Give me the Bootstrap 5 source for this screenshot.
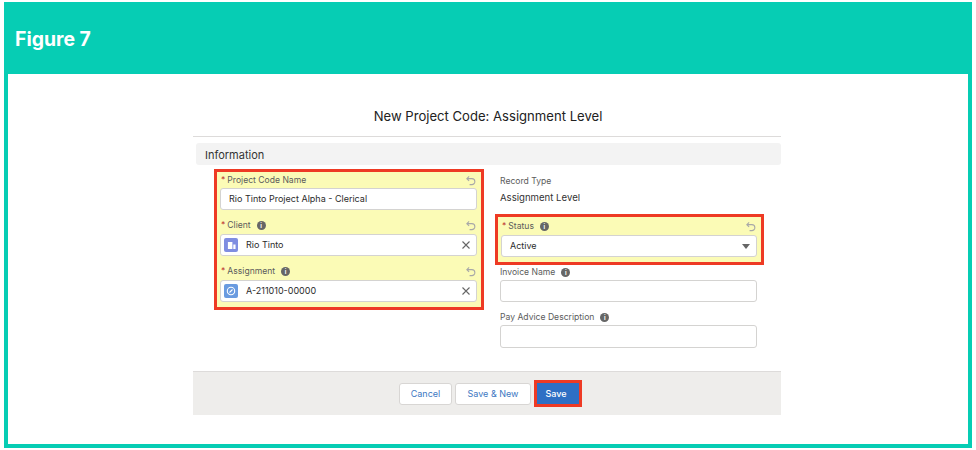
<!DOCTYPE html>
<html lang="en">
<head>
    <meta charset="UTF-8">
    <meta name="viewport" content="width=device-width, initial-scale=1.0">
    <title>Figure 7</title>
    <link href="https://cdn.jsdelivr.net/npm/bootstrap@5.3.0/dist/css/bootstrap.min.css" rel="stylesheet">
    <style>
        html, body { height: 100%; }
        body {
            background: #fff;
            font-family: Inter, "Liberation Sans", sans-serif;
            color: #2b2b2b;
            overflow: hidden;
        }
        .figure-frame {
            width: 968px;
            height: 446px;
            margin: 2px 4px;
            border: 4px solid #06cdb4;
            border-top: 0;
        }
        .figure-head {
            height: 72px;
            margin: 0 -4px;
            background: #06cdb4;
            color: #fff;
            font-weight: 700;
            font-size: 19.4px;
            padding: 26px 0 0 11px;
            line-height: 22px;
        }
        .dialog { width: 588px; margin-left: 185px; }
        .dialog-title {
            height: 63px;
            padding: 32px 0 0 2px;
            line-height: 20px;
            font-size: 13.1px;
            text-align: center;
            border-bottom: 1px solid #dddbda;
            color: #222;
        }
        .section-bar {
            margin: 6px 0 0 3px;
            height: 22px;
            line-height: 24px;
            padding-left: 9px;
            font-size: 11px;
            background: #f3f3f3;
            border-radius: 3px;
            color: #333;
        }
        .form-area { height: 206px; padding-top: 4px; }
        .col-left { width: 270px; margin-left: 21px; }
        .col-right { width: 269px; margin-left: 11px; }
        .red-box { border: 3px solid #ee3a24; background: #fbfbb6; padding: 0 4px 5px 3px; }
        .col-left .red-box { height: 141px; }
        .status-box { height: 51px; margin-top: 6px; }
        .field-label {
            height: 24px;
            padding-top: 6px;
            line-height: 13px;
            font-size: 8.6px;
            color: #5c5c5c;
            display: flex;
            align-items: center;
            gap: 5px;
        }
        .field-label .req { color: #c23934; margin-right: -3px; margin-left: 1px; }
        .field-label.first { height: 16px; padding-top: 0; }
        .field-label.status { height: 18px; padding-top: 0; }
        .undo { margin-left: auto; margin-right: 1px; width: 11px; height: 11px; }
        .info {
            width: 9px; height: 9px;
            border-radius: 50%;
            background: #666;
            color: #fff;
            font-size: 6px;
            line-height: 9px;
            font-weight: 700;
            text-align: center;
            margin-left: 1px;
        }
        .sf-input {
            height: 22px;
            border: 1px solid #d4d3d1;
            border-radius: 3px;
            background: #fff;
            font-size: 9px;
            color: #2b2b2b;
            display: flex;
            align-items: center;
            padding: 0 8px;
        }
        .sf-input.has-icon { padding: 0 5px 0 3px; gap: 8px; }
        .sf-input.select-like { padding-right: 6px; }
        .obj-icon {
            width: 14px; height: 14px;
            border-radius: 2px;
            display: flex;
            align-items: center;
            justify-content: center;
        }
        .obj-client { background: #7f8de1; }
        .obj-assignment { background: #6a9be0; }
        .x-icon { margin-left: auto; width: 10px; height: 10px; }
        .caret { margin-left: auto; border: 4px solid transparent; border-top: 5px solid #666; border-bottom: 0; }
        .record-type { height: 39px; padding: 6px 0 0 5px; }
        .record-type .small-label { font-size: 8.6px; line-height: 12px; color: #5c5c5c; }
        .record-type .value { font-size: 9.6px; line-height: 14px; margin-top: 4px; color: #333; }
        .plain-field { width: 257px; margin-left: 5px; }
        .plain-field .field-label { height: 15px; padding-top: 0; }
        .plain-field + .plain-field .field-label { margin-top: 8px; }
        .plain-field + .plain-field .sf-input { height: 23px; }
        .footer-bar {
            height: 44px;
            background: #eeedeb;
            border-top: 1px solid #dddbda;
            display: flex;
            align-items: center;
            justify-content: center;
            gap: 3px;
            padding-left: 7px;
        }
        .btn-sf {
            height: 22px;
            padding: 0;
            background: #fff;
            border: 1px solid #d8d6d4;
            border-radius: 3px;
            font-size: 9px;
            line-height: 20px;
            color: #3d78c2;
        }
        .btn-cancel { width: 53px; }
        .btn-new { width: 76px; }
        .save-wrap { border: 3px solid #ee3a24; height: 27px; width: 48px; display: flex; }
        .btn-sf.save { background: #2e6fc4; border-color: #2e6fc4; color: #fff; width: 100%; height: 100%; border-radius: 0; font-weight: 500; padding-right: 4px; }
    </style>
</head>
<body>
    <div class="figure-frame">
        <div class="figure-head">Figure 7</div>
        <div class="dialog">
            <div class="dialog-title">New Project Code: Assignment Level</div>
            <div class="section-bar">Information</div>

            <div class="form-area d-flex">
                <!-- Left column -->
                <div class="col-left">
                    <div class="red-box">
                        <div class="field-label first"><span class="req">*</span><span>Project Code Name</span>
                            <svg class="undo" viewBox="0 0 12 12" fill="none" stroke="#a8a8a8" stroke-width="1.2"><path d="M4.5 1.5 2 4l2.5 2.5M2 4h5.5a3 3 0 0 1 0 6.5H5"/></svg></div>
                        <div class="sf-input">Rio Tinto Project Alpha - Clerical</div>
                        <div class="field-label"><span class="req">*</span><span>Client</span><span class="info">i</span>
                            <svg class="undo" viewBox="0 0 12 12" fill="none" stroke="#a8a8a8" stroke-width="1.2"><path d="M4.5 1.5 2 4l2.5 2.5M2 4h5.5a3 3 0 0 1 0 6.5H5"/></svg></div>
                        <div class="sf-input has-icon">
                            <span class="obj-icon obj-client"><svg width="9" height="9" viewBox="0 0 10 10" fill="#fff"><path d="M1 1h5v8H1zM7 4h2.5v5H7z"/></svg></span>
                            <span>Rio Tinto</span>
                            <svg class="x-icon" viewBox="0 0 10 10" stroke="#666" stroke-width="1.1"><path d="M1.5 1.5l7 7M8.5 1.5l-7 7"/></svg>
                        </div>
                        <div class="field-label"><span class="req">*</span><span>Assignment</span><span class="info">i</span>
                            <svg class="undo" viewBox="0 0 12 12" fill="none" stroke="#a8a8a8" stroke-width="1.2"><path d="M4.5 1.5 2 4l2.5 2.5M2 4h5.5a3 3 0 0 1 0 6.5H5"/></svg></div>
                        <div class="sf-input has-icon">
                            <span class="obj-icon obj-assignment"><svg width="10" height="10" viewBox="0 0 10 10" fill="none" stroke="#fff" stroke-width="1.1"><circle cx="5" cy="5" r="3.7"/><path d="M3.5 6.5 6.5 3.5"/></svg></span>
                            <span>A-211010-00000</span>
                            <svg class="x-icon" viewBox="0 0 10 10" stroke="#666" stroke-width="1.1"><path d="M1.5 1.5l7 7M8.5 1.5l-7 7"/></svg>
                        </div>
                    </div>
                </div>

                <!-- Right column -->
                <div class="col-right">
                    <div class="record-type">
                        <div class="small-label">Record Type</div>
                        <div class="value">Assignment Level</div>
                    </div>
                    <div class="red-box status-box">
                        <div class="field-label status"><span class="req">*</span><span>Status</span><span class="info">i</span>
                            <svg class="undo" viewBox="0 0 12 12" fill="none" stroke="#a8a8a8" stroke-width="1.2"><path d="M4.5 1.5 2 4l2.5 2.5M2 4h5.5a3 3 0 0 1 0 6.5H5"/></svg></div>
                        <div class="sf-input select-like"><span>Active</span><span class="caret"></span></div>
                    </div>
                    <div class="plain-field">
                        <div class="field-label"><span>Invoice Name</span><span class="info">i</span></div>
                        <div class="sf-input"></div>
                    </div>
                    <div class="plain-field">
                        <div class="field-label"><span>Pay Advice Description</span><span class="info">i</span></div>
                        <div class="sf-input"></div>
                    </div>
                </div>
            </div>

            <div class="footer-bar">
                <button class="btn btn-sf btn-cancel">Cancel</button>
                <button class="btn btn-sf btn-new">Save &amp; New</button>
                <div class="save-wrap"><button class="btn btn-sf save">Save</button></div>
            </div>
        </div>
    </div>
    <script src="https://cdn.jsdelivr.net/npm/bootstrap@5.3.0/dist/js/bootstrap.bundle.min.js"></script>
</body>
</html>
